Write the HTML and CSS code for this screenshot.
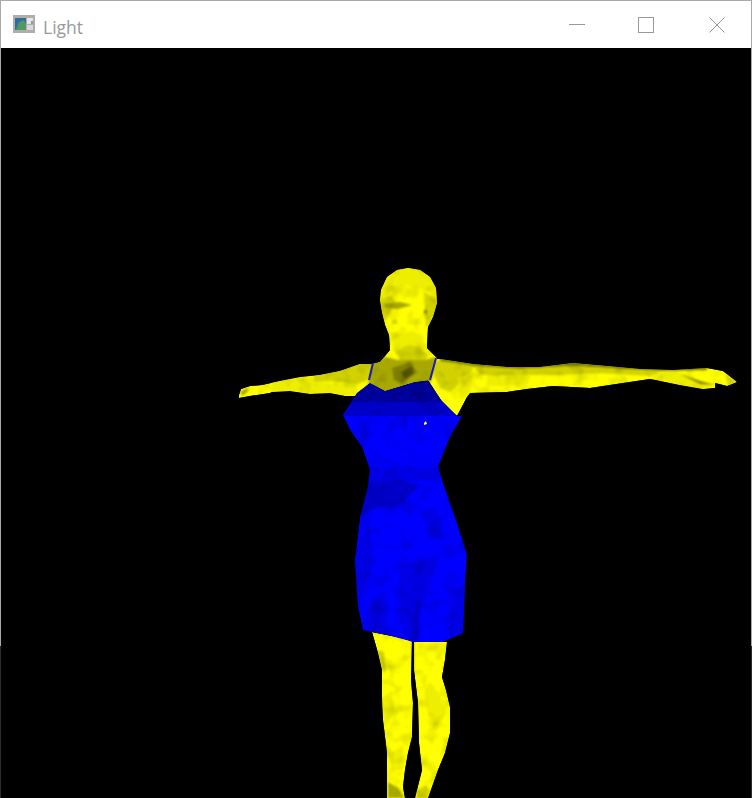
FILE: index.html
```html
<!DOCTYPE html>
<html lang="en">
<head>
  <meta charset="UTF-8">
  <meta name="viewport" content="width=device-width, initial-scale=1.0">
  <title>Light</title>
  <link rel="stylesheet" href="styles.css">
</head>
<body>
  <div class="window">

    <div class="titlebar">
      <svg class="app-icon" viewBox="0 0 22 18">
        <rect class="icon-frame" x="0" y="0" width="22" height="18"></rect>
        <rect class="icon-blue" x="2" y="3" width="11" height="12"></rect>
        <polygon class="icon-green" points="3,15 6,7 11,5 13,9 13,15"></polygon>
        <rect class="icon-light" x="14" y="3" width="6" height="6"></rect>
        <rect class="icon-teal" x="18" y="6" width="2" height="3"></rect>
        <rect class="icon-pale" x="14" y="10" width="6" height="5"></rect>
      </svg>
      <span class="title">Light</span>

      <div class="controls">
        <svg class="control minimize" viewBox="0 0 16 16"><path d="M0 7.5H16"></path></svg>
        <svg class="control" viewBox="0 0 16 16"><rect x="0.5" y="0.5" width="15" height="15"></rect></svg>
        <svg class="control" viewBox="0 0 16 16"><path d="M0.5 0.5L15.5 15.5M15.5 0.5L0.5 15.5"></path></svg>
      </div>
    </div>

    <div class="canvas">
      <!-- viewBox uses window coordinates so the mesh points read straight off the screenshot -->
      <svg class="scene" viewBox="1 48 750 750">
        <defs>
          <path id="skin" d="M372 632L378 653L382 670L382 697L383 720L387 753L387 798L405 798L403 787L405 770L408 753L412 737L413 703L411 680L412 640Z
            M414 640L414 670L418 703L419 743L422 770L415 798L428 798L432 787L438 770L445 753L450 733L450 707L446 690L442 677L445 660L447 642Z
            M239 395L241 389L250 386L262 385L280 381L300 377L320 375L340 371L360 364L372 364L374 384L357 396L345 396L330 393L310 394L290 391L272 392L270 393L250 396L239 398Z
            M425 358L440 359L473 364L507 367L540 367L573 363L607 366L640 369L673 370L707 368L723 371L737 382L727 386L715 383L715 388L703 389L680 385L650 379L623 383L590 388L553 386L527 389L507 392L470 393L467 397L457 416L444 405L428 380Z
            M408 268L420 270L430 277L436 288L437 303L433 317L428 327L427 348L437 358L430 380L415 382L385 391L370 383L372 364L380 362L390 350L389 335L385 325L382 312L380 300L381 290L387 277L397 270Z"></path>
          <path id="frock" d="M370 383L385 391L415 382L428 381L441 400L457 416L462 416L450 437L438 467L442 480L457 523L467 555L465 583L463 633L443 642L413 642L387 635L363 630L358 607L355 560L360 517L368 487L370 470L362 447L350 430L343 415L357 393Z"></path>
          <clipPath id="skin-clip"><use href="#skin"></use></clipPath>
          <clipPath id="frock-clip"><use href="#frock"></use></clipPath>
          <!-- mottled shading, the mesh is faceted everywhere -->
          <filter id="mottle" x="0" y="0" width="100%" height="100%">
            <feTurbulence type="fractalNoise" baseFrequency="0.07" numOctaves="2" seed="7"></feTurbulence>
            <feColorMatrix type="matrix" values="0 0 0 0 0  0 0 0 0 0  0 0 0 0 0  0.8 0 0 0 -0.38"></feColorMatrix>
            <feComposite in2="SourceAlpha" operator="in" result="shade"></feComposite>
            <feMerge>
              <feMergeNode in="SourceGraphic"></feMergeNode>
              <feMergeNode in="shade"></feMergeNode>
            </feMerge>
          </filter>
        </defs>

        <g filter="url(#mottle)">
          <g clip-path="url(#skin-clip)">
            <use class="y1" href="#skin"></use>
            <g class="soft">
              <!-- legs -->
              <polygon class="y3" points="378,650 384,652 386,672 383,672"></polygon>
              <polygon class="y2" points="381,700 392,690 394,712 385,728"></polygon>
              <polygon class="y2" points="389,755 403,745 403,770 392,770"></polygon>
              <polygon class="y4" points="388,782 398,788 404,798 388,798"></polygon>
              <polygon class="y2" points="424,690 430,682 440,695 446,713 436,726 428,716"></polygon>
              <polygon class="y4" points="412,640 414,640 414,672 412,672"></polygon>
              <polygon class="y3" points="417,790 426,785 430,790 428,798 417,798"></polygon>

              <!-- left arm -->
              <polygon class="y2" points="272,381 314,376 314,393 272,392"></polygon>
              <polygon class="y3" points="314,370 372,360 372,378 358,384 332,381 314,382"></polygon>
              <polygon class="y2" points="314,382 358,384 356,396 314,393"></polygon>
              <polygon class="y4" points="240,392 247,388 249,390 243,396"></polygon>

              <!-- right arm, dim along the top edge -->
              <polygon class="y5" points="440,356 480,362 520,365 573,361 607,364 660,368 707,366 707,370 660,371 607,368 573,366 520,369 480,367 440,362"></polygon>
              <polygon class="y3" points="473,366 520,369 573,366 607,368 660,372 650,376 600,373 560,375 530,375 505,378 480,374"></polygon>
              <polygon class="y2" points="487,376 530,374 528,384 510,386 487,386"></polygon>
              <polygon class="y2" points="660,372 690,374 700,382 712,386 703,390 680,386 660,380"></polygon>
              <polygon class="y5" points="680,374 700,381 715,385 700,384"></polygon>
              <polygon class="y3" points="725,373 737,382 728,386"></polygon>

              <!-- shoulder -->
              <polygon class="y3" points="432,360 448,362 474,366 470,374 450,392 440,388 434,376"></polygon>
              <polygon class="y2" points="458,378 474,372 470,394 460,400"></polygon>

              <!-- head -->
              <polygon class="y2" points="408,266 422,268 432,276 438,290 438,300 425,290 405,285 392,290 380,302 380,288 387,275 397,268"></polygon>
              <polygon class="y3" points="424,292 438,300 437,310 431,320 426,328 425,312"></polygon>
              <polygon class="y3" points="379,300 391,296 396,302 385,322 379,310"></polygon>
              <polygon class="y4" points="383,304 400,302 412,305 398,309 386,308"></polygon>
              <polygon class="y5" points="424,310 427,310 427,314 424,313"></polygon>
              <polygon class="y3" points="392,320 397,319 397,324 392,324"></polygon>
              <polygon class="y2" points="386,330 400,334 412,331 423,336 425,350 410,348 395,352 392,337"></polygon>

              <!-- chest above the neckline -->
              <polygon class="y3" points="395,352 408,345 420,347 428,356 424,362 400,360"></polygon>
              <polygon class="y4" points="385,357 398,360 425,360 436,357 431,382 415,384 385,393 368,385 372,363"></polygon>
              <polygon class="y5" points="392,368 410,362 417,372 402,384 394,380"></polygon>
              <polygon class="y6" points="401,372 412,366 414,374 405,379"></polygon>
            </g>
          </g>
          <g clip-path="url(#frock-clip)">
            <use class="b1" href="#frock"></use>
            <polygon class="b4" points="340,385 370,383 385,391 415,382 430,381 445,402 340,402"></polygon>
            <polygon class="b3" points="340,402 445,402 462,416 340,416"></polygon>
            <g class="soft">
              <polygon class="b2" points="365,468 438,467 442,480 365,482"></polygon>
              <polygon class="b3" points="365,482 400,480 420,485 400,505 376,507 358,520"></polygon>
              <polygon class="b3" points="376,493 400,491 398,504 378,506"></polygon>
              <polygon class="b2" points="420,510 436,508 445,540 430,538"></polygon>
              <polygon class="b2" points="352,560 370,520 372,555 368,590 356,610"></polygon>
              <polygon class="b2" points="400,565 440,555 425,600 412,645 398,620"></polygon>
              <polygon class="b2" points="372,600 385,590 388,638 360,632"></polygon>
              <polygon class="b2" points="449,590 467,583 465,636 450,638"></polygon>
              <polygon class="b3" points="403,417 406,417 405,432 403,428"></polygon>
              <polygon class="b3" points="412,618 420,595 419,635 414,645"></polygon>
              <polygon class="b2" points="362,420 372,417 366,440 360,447"></polygon>
            </g>
          </g>

          <!-- straps and the bit of skin showing through -->
          <path class="strap" d="M373 363L369 380M436 358L430 380"></path>
          <polygon class="y1" points="424,423 426,421 427,424 424,425"></polygon>
        </g>
      </svg>
    </div>

  </div>
</body>
</html>
```

FILE: styles.css
```css
body {
  margin: 0;
  background: #fff;
}

.window {
  display: flex;
  flex-direction: column;
  width: 752px;
  height: 798px;
  box-sizing: border-box;
  padding: 1px 1px 0;
  background: linear-gradient(#a9a9a9 646px, #2e2e2e 646px);
}

.titlebar {
  display: flex;
  align-items: center;
  height: 47px;
  box-sizing: border-box;
  padding: 1px 26px 0 12px;
  background: #fff;
}

.app-icon {
  width: 22px;
  height: 18px;
  margin-bottom: 2px;
  filter: blur(0.5px);
}

.icon-frame {
  fill: #b5abab;
}
.icon-blue {
  fill: #2f6f9f;
}
.icon-green {
  fill: #4f9a62;
}
.icon-light {
  fill: #e6e6e6;
}
.icon-teal {
  fill: #6aa8a0;
}
.icon-pale {
  fill: #d8d8d8;
}

.title {
  margin: 4px 0 0 8px;
  font-family: "Open Sans", sans-serif;
  font-size: 17.5px;
  color: #999;
}

.controls {
  display: flex;
  gap: 55px;
  margin-left: auto;
}

.control {
  width: 16px;
  height: 16px;
  fill: none;
  stroke: #999;
  stroke-width: 1;
}
.minimize {
  margin-right: -2px;
}

.canvas {
  flex: 1;
  min-height: 0;
  background: #000;
}

.scene {
  display: block;
  width: 100%;
  height: 100%;
}

.soft {
  filter: blur(1.3px);
}

.y1 {
  fill: #ffff00;
}
.y2 {
  fill: #eeee00;
}
.y3 {
  fill: #d2d200;
}
.y4 {
  fill: #a8a800;
}
.y5 {
  fill: #808000;
}
.y6 {
  fill: #5c5c00;
}

.b1 {
  fill: #0000ff;
}
.b2 {
  fill: #0000e4;
}
.b3 {
  fill: #0000c8;
}
.b4 {
  fill: #00009c;
}

.strap {
  fill: none;
  stroke: #1a1acc;
  stroke-width: 2;
}
```
